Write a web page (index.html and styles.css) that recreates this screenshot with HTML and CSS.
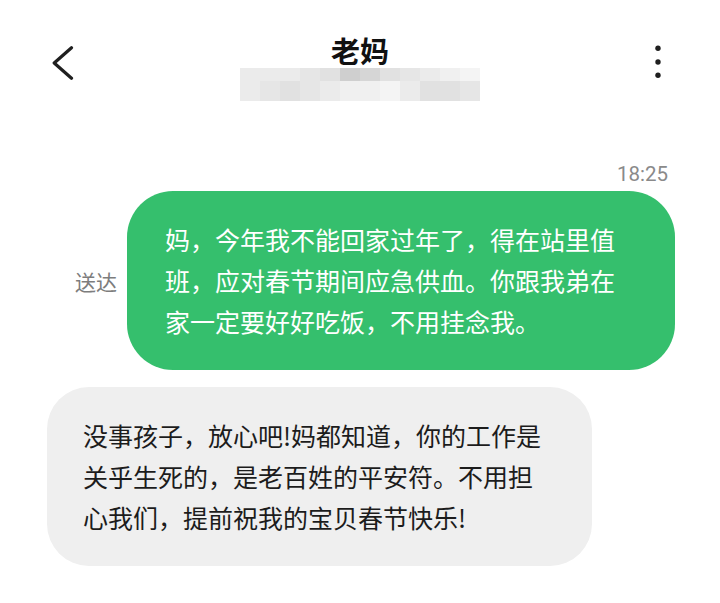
FILE: index.html
```html
<!DOCTYPE html>
<html lang="zh-CN">
<head>
<meta charset="utf-8">
<title>老妈</title>
<link rel="stylesheet" href="styles.css">
</head>
<body>
<div class="screen">
  <header class="topbar">
    <div class="side side-left">
      <svg class="back" width="22" height="34" viewBox="0 0 22 34" aria-hidden="true">
        <polyline points="19.5,1.8 2.2,17 19.5,32.2" fill="none" stroke="#1f1f1f" stroke-width="3.2" stroke-linecap="round" stroke-linejoin="round"/>
      </svg>
    </div>
    <div class="title-col">
      <div class="title">老妈</div>
      <div class="masked">
        <i class="s3"></i><i class="s3"></i><i class="s3"></i><i class="s4"></i><i class="s5"></i><i class="s7"></i><i class="s6"></i><i class="s5"></i><i class="s4"></i><i class="s3"></i><i class="s2"></i><i class="s1"></i>
        <i class="s3"></i><i class="s4"></i><i class="s5"></i><i class="s4"></i><i class="s3"></i><i class="s2"></i><i class="s2"></i><i class="s1"></i><i class="s3"></i><i class="s5"></i><i class="s5"></i><i class="s4"></i>
      </div>
    </div>
    <div class="side side-right">
      <svg class="more" width="10" height="34" viewBox="0 0 10 34" aria-hidden="true">
        <circle cx="5" cy="3.2" r="2.7" fill="#1f1f1f"/>
        <circle cx="5" cy="17" r="2.7" fill="#1f1f1f"/>
        <circle cx="5" cy="30.3" r="2.7" fill="#1f1f1f"/>
      </svg>
    </div>
  </header>

  <main class="chat">
    <div class="time">18:25</div>
    <div class="row row-out">
      <span class="status">送达</span>
      <div class="bubble bubble-out">妈，今年我不能回家过年了，得在站里值班，应对春节期间应急供血。你跟我弟在家一定要好好吃饭，不用挂念我。</div>
    </div>
    <div class="row row-in">
      <div class="bubble bubble-in">没事孩子，放心吧!妈都知道，你的工作是关乎生死的，是老百姓的平安符。不用担心我们，提前祝我的宝贝春节快乐!</div>
    </div>
  </main>
</div>
</body>
</html>
```

FILE: styles.css
```css
* { box-sizing: border-box; }

html, body {
  margin: 0;
  padding: 0;
  background: #ffffff;
}

body {
  font-family: "Noto Sans CJK SC", "Noto Sans", sans-serif;
  color: #1c1c1c;
}

.screen {
  width: 720px;
  height: 603px;
  overflow: hidden;
}

.topbar {
  display: grid;
  grid-template-columns: 1fr 240px 1fr;
  padding-top: 33px;
}

.side {
  display: flex;
  align-items: flex-start;
}

.side-left {
  padding-left: 52px;
}

.side-left .back {
  margin-top: 13px;
  display: block;
}

.side-right {
  justify-content: flex-end;
  padding-right: 57px;
}

.side-right .more {
  margin-top: 12px;
  display: block;
}

.title-col {
  display: flex;
  flex-direction: column;
  align-items: center;
}

.title {
  font-size: 29px;
  line-height: 35px;
  font-weight: 700;
  color: #111111;
}

.masked {
  display: grid;
  grid-template-columns: repeat(12, 20px);
  grid-template-rows: 13px 20px;
  width: 240px;
}

.masked i { display: block; }
.masked .s1 { background: #f4f4f4; }
.masked .s2 { background: #f0f0f0; }
.masked .s3 { background: #ebebeb; }
.masked .s4 { background: #e6e6e6; }
.masked .s5 { background: #e1e1e1; }
.masked .s6 { background: #d6d6d6; }
.masked .s7 { background: #cfcfcf; }

.chat {
  padding: 0 45px 0 47px;
}

.time {
  margin-top: 62px;
  padding-right: 7px;
  text-align: right;
  font-family: Roboto, "Noto Sans", sans-serif;
  font-size: 20.5px;
  line-height: 22px;
  color: #8a8a8a;
}

.row {
  display: flex;
  align-items: center;
}

.row-out {
  justify-content: flex-end;
  gap: 10px;
  margin-top: 6px;
}

.row-in {
  justify-content: flex-start;
  margin-top: 17px;
}

.status {
  font-size: 21px;
  line-height: 26px;
  color: #7d7d7d;
}

.bubble {
  font-size: 25px;
  line-height: 41px;
}

.bubble-out {
  max-width: 548px;
  padding: 28px 40px 28px 38px;
  background: #35bf6d;
  color: #ffffff;
  border-radius: 46px;
}

.bubble-in {
  max-width: 545px;
  padding: 28px 36px;
  background: #efefef;
  color: #1c1c1c;
  border-radius: 42px;
}
```
